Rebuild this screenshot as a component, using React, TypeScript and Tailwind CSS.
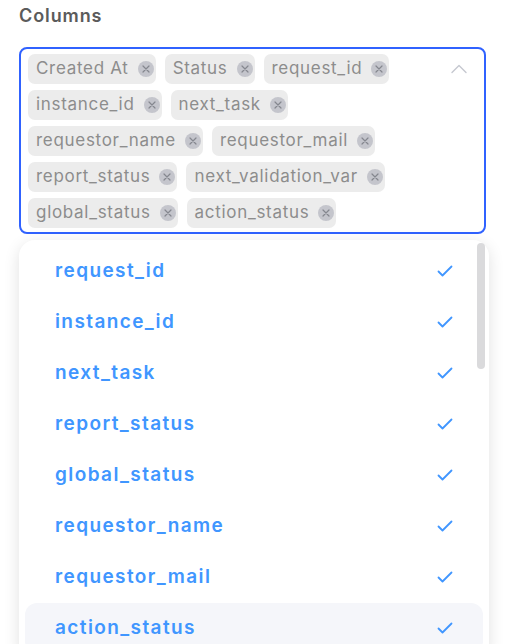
import { useState } from 'react';

const selected = [
  'Created At',
  'Status',
  'request_id',
  'instance_id',
  'next_task',
  'requestor_name',
  'requestor_mail',
  'report_status',
  'next_validation_var',
  'global_status',
  'action_status',
];

const options = [
  'request_id',
  'instance_id',
  'next_task',
  'report_status',
  'global_status',
  'requestor_name',
  'requestor_mail',
  'action_status',
];

function RemoveIcon() {
  return (
    <span className="flex h-[16px] w-[16px] items-center justify-center rounded-full bg-[#c4c5cc]">
      <svg width="8" height="8" viewBox="0 0 8 8" fill="none">
        <path d="M1 1l6 6M7 1L1 7" stroke="#85878f" strokeWidth="1.2" strokeLinecap="round" />
      </svg>
    </span>
  );
}

function Check() {
  return (
    <svg width="16" height="12" viewBox="0 0 16 12" fill="none">
      <path d="M1.5 6.5l4 4L14.5 1.5" stroke="#4096ff" strokeWidth="1.8" strokeLinecap="round" strokeLinejoin="round" />
    </svg>
  );
}

export default function App() {
  const [hovered] = useState('action_status');

  return (
    <div className="h-[644px] w-[505px] overflow-hidden bg-white px-[19px] pt-[4px] font-['Inter',sans-serif]">
      <div className="text-[18px] font-semibold leading-[24px] tracking-[0.9px] text-[#5b5b5b]">Columns</div>

      <div className="relative mt-[19px] h-[187px] rounded-[8px] border-2 border-[#3062ff] pl-[7px] pr-[40px] pt-[5px]">
        <div className="flex flex-wrap gap-x-[9px] gap-y-[6px]">
          {selected.map((s) => (
            <div
              key={s}
              className="flex h-[30px] items-center gap-[9px] rounded-[7px] bg-[#ececec] pl-[8px] pr-[2px] text-[17px] tracking-[0.7px] text-[#8d8d8d]"
            >
              <span>{s}</span>
              <RemoveIcon />
            </div>
          ))}
        </div>
        <svg className="absolute right-[17px] top-[15px]" width="16" height="10" viewBox="0 0 16 10" fill="none">
          <path d="M1 8.5L8 1.5l7 7" stroke="#c5c8d0" strokeWidth="1.4" strokeLinecap="round" strokeLinejoin="round" />
        </svg>
      </div>

      <div className="relative mr-[-3px] mt-[6px] h-[420px] rounded-[16px] bg-white px-[6px] pt-[6px] shadow-[0_4px_16px_rgba(0,0,0,0.12)]">
        <div className="absolute right-[4px] top-[3px] h-[126px] w-[8px] rounded-full bg-[#dadadc]" />
        <div className="flex flex-col gap-[1px]">
          {options.map((o) => (
            <div
              key={o}
              className={`flex h-[50px] items-center justify-between rounded-[12px] pl-[30px] pr-[30px] text-[19px] font-semibold tracking-[1.4px] text-[#4096ff] ${
                o === hovered ? 'bg-[#f5f6fa]' : ''
              }`}
            >
              <span>{o}</span>
              <Check />
            </div>
          ))}
        </div>
      </div>
    </div>
  );
}
